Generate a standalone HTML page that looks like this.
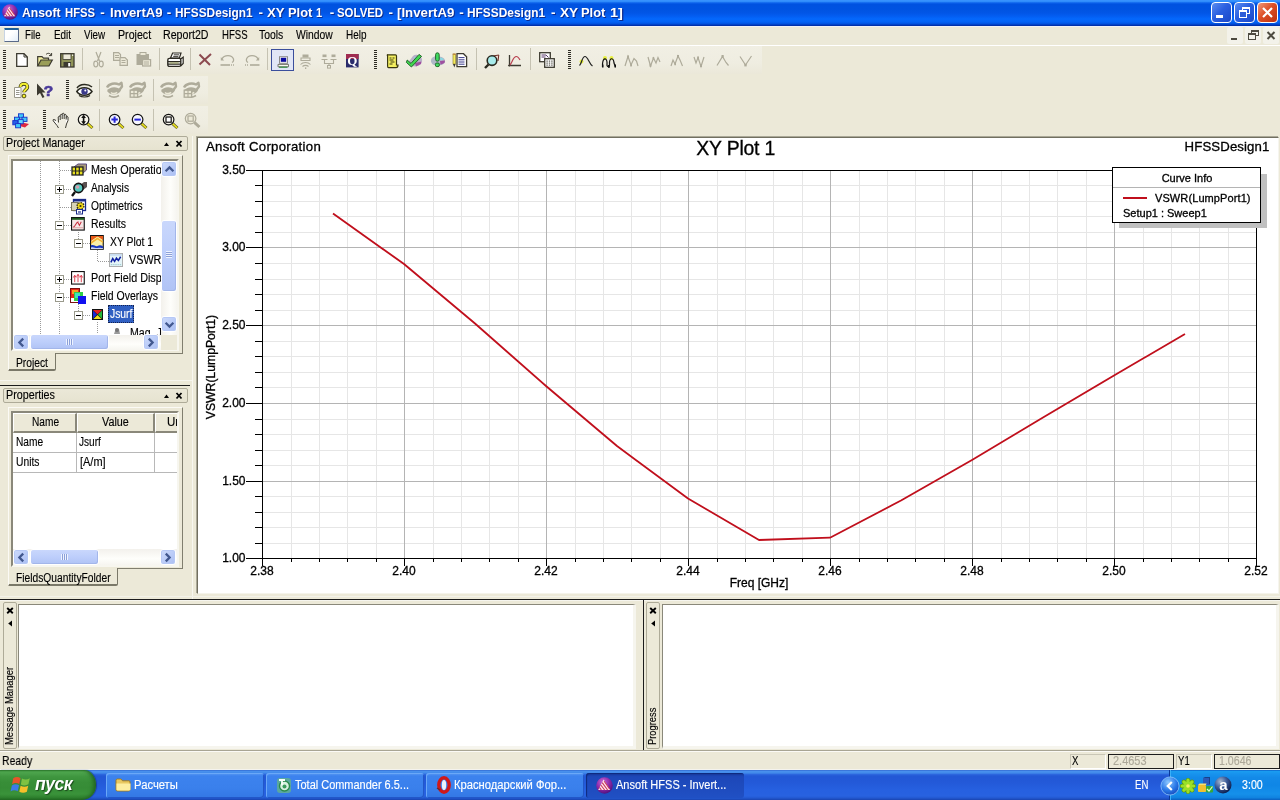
<!DOCTYPE html>
<html lang="en">
<head>
<meta charset="utf-8">
<title>Ansoft HFSS - InvertA9 - HFSSDesign1 - XY Plot 1 - SOLVED - [InvertA9 - HFSSDesign1 - XY Plot 1]</title>
<style>
html,body{margin:0;padding:0}
body{width:1280px;height:800px;overflow:hidden;position:relative;background:#ece9d8;
 font-family:"Liberation Sans",sans-serif;font-size:11px;color:#000;line-height:13px}
.a{position:absolute;box-sizing:border-box}
.t{position:absolute;white-space:nowrap;line-height:13px;font-size:12px;-webkit-text-stroke:0.14px currentColor}
svg{position:absolute;overflow:visible}
body>div{will-change:transform}
/* title bar */
#title{left:0;top:0;width:1280px;height:26px;
 background:linear-gradient(to bottom,#3b95ff 0,#2f8cfb 1.5px,#0a60ea 3px,#0052e0 4.5px,#0053e1 9px,#0256e6 13px,#035df1 16px,#0468fc 19px,#0362f5 22px,#0150dc 24px,#0136b8 25px,#002c9e 26px)}
#title .t{color:#fff;font-weight:bold;font-size:13px;line-height:15px;text-shadow:1px 1px 0 #0c2a8c;letter-spacing:-0.09px}
.tb{position:absolute;top:2px;width:21px;height:21px;box-sizing:border-box;border:1px solid #fff;border-radius:4px;
 background:linear-gradient(135deg,#5c8df0 0,#2a5fe0 45%,#1a47c8 100%)}
.tb.x{background:linear-gradient(135deg,#f0997a 0,#dd4f26 45%,#bd3010 100%)}
#ttxt{left:0;top:0}
#ttxt .w{position:absolute;top:5px;white-space:nowrap;color:#fff;font-weight:bold;font-size:13.5px;line-height:15px;text-shadow:1px 1px 0 #0c2a8c;transform-origin:0 0}
#plot text{stroke:#000;stroke-width:.3px}
/* menu */
#menu{left:0;top:26px;width:1280px;height:19px;background:#ece9d8}
#menu .t{top:3px}
.hl{background:#fff;height:1px}
/* toolbars */
.grip{position:absolute;width:3px;height:20px;
 background:repeating-linear-gradient(to bottom,#2e2c24 0,#2e2c24 1px,transparent 1px,transparent 2px)}
.sep{position:absolute;width:1px;height:22px;background:#c5c2b2}
.band{position:absolute;height:28px;background:linear-gradient(to bottom,#f1efe4 0,#efede1 60%,#ebe8d9 100%)}
/* dock captions */
.cap{position:absolute;box-sizing:border-box;border:1px solid #aeab98;border-radius:2px;
 background:linear-gradient(to bottom,#ebe8d8 0,#e6e3d0 100%)}
.sunk{position:absolute;box-sizing:border-box;border-top:2px solid #8a887a;border-left:2px solid #8a887a;border-right:2px solid #f7f6ef;border-bottom:2px solid #f7f6ef;background:#fff}
.frame{position:absolute;box-sizing:border-box;border:1px solid #fbfaf5;border-right-color:#807e6e;border-bottom-color:#807e6e}
.tab{position:absolute;box-sizing:border-box;background:#ece9d8;border-left:1px solid #fbfaf5;border-right:1px solid #7a7868;border-bottom:2px solid #7a7868;border-radius:0 0 2px 1px}
/* scrollbars */
.sbtn{position:absolute;box-sizing:border-box;width:16px;height:16px;border:1px solid #fff;border-radius:3px;
 background:linear-gradient(135deg,#cddbfb 0,#bccdf8 50%,#aabef2 100%);box-shadow:inset 0 0 0 1px #b6c8f5}
.sthumb{position:absolute;box-sizing:border-box;border:1px solid #fff;border-radius:3px;background:linear-gradient(to bottom,#c9d7fc 0,#bdcefb 50%,#b0c3f5 100%);box-shadow:inset -1px -1px 0 #a3b6ea}
.strack{position:absolute;background:linear-gradient(to bottom,#f3f1ec 0,#fefefb 60%,#f6f5f0 100%)}
.strackv{position:absolute;background:linear-gradient(to right,#f3f1ec 0,#fefefb 60%,#f6f5f0 100%)}
/* tree */
.tr{position:absolute;white-space:nowrap;line-height:13px;font-size:12px;-webkit-text-stroke:0.14px currentColor}
.pm{position:absolute;box-sizing:border-box;width:9px;height:9px;border:1px solid #9a9a8c;background:#fff}
.pm:before{content:"";position:absolute;left:1px;top:3px;width:5px;height:1px;background:#000}
.pm.p:after{content:"";position:absolute;left:3px;top:1px;width:1px;height:5px;background:#000}
/* status */
.sbox{position:absolute;box-sizing:border-box;height:15px;border:1px solid #c9c6b6;border-right-color:#fff;border-bottom-color:#fff}
.sval{position:absolute;box-sizing:border-box;height:15px;border:1px solid #1c1c1c;color:#aca899}
/* taskbar */
#task{left:0;top:770px;width:1280px;height:30px;
 background:linear-gradient(to bottom,#2a5cc8 0,#4a92ee 1px,#418aea 3px,#2c66de 4.5px,#2258d5 6px,#2359d8 12px,#2660e0 20px,#2862e0 26px,#2258d0 28px,#1a44b0 30px)}
.tbtn{position:absolute;box-sizing:border-box;top:3px;height:25px;border-radius:3px;color:#fff;
 background:linear-gradient(to bottom,#5b9bf3 0,#3c82ee 12%,#3a80ec 60%,#3377e4 100%);box-shadow:inset 1px 1px 0 #6aa8f8,inset -1px -1px 0 #2257c8}
.tbtn.act{background:linear-gradient(to bottom,#17389a 0,#1d47b8 15%,#2050c4 100%);box-shadow:inset 1px 1px 1px #0f2a7c}
.tbtn .t{top:6px;color:#fff;font-size:12px}
</style>
</head>
<body>

<!-- ================= TITLE BAR ================= -->
<div class="a" id="title">
 <svg style="left:2px;top:4px" width="16" height="16" viewBox="0 0 17 17">
  <defs><radialGradient id="lg" cx="40%" cy="30%" r="75%"><stop offset="0" stop-color="#c86ad8"/><stop offset="0.55" stop-color="#8a28a8"/><stop offset="1" stop-color="#4a0f78"/></radialGradient></defs>
  <circle cx="8.5" cy="8.5" r="8.3" fill="url(#lg)"/>
  <path d="M7.6 2.6 L14.2 13 H2.2 Z" fill="#ffe4ec"/>
  <path d="M6.2 5.6 L11.6 13 M4.8 8 L8.6 13 M3.4 10.4 L5.4 13 M8.2 4.2 L13.6 12" stroke="#c8385a" stroke-width="1.1" fill="none"/>
 </svg>
 <div class="a" id="ttxt"><span class="w" style="left:21.7px;transform:scaleX(0.903)">Ansoft</span> <span class="w" style="left:65.2px;transform:scaleX(0.836)">HFSS</span> <span class="w" style="left:100.2px;transform:scaleX(1.000)">-</span> <span class="w" style="left:109.7px;transform:scaleX(0.974)">InvertA9</span> <span class="w" style="left:166.7px;transform:scaleX(1.000)">-</span> <span class="w" style="left:174.7px;transform:scaleX(0.877)">HFSSDesign1</span> <span class="w" style="left:258.4px;transform:scaleX(1.000)">-</span> <span class="w" style="left:267.2px;transform:scaleX(0.977)">XY</span> <span class="w" style="left:288.4px;transform:scaleX(0.955)">Plot</span> <span class="w" style="left:315.7px;transform:scaleX(0.820)">1</span> <span class="w" style="left:329.7px;transform:scaleX(1.000)">-</span> <span class="w" style="left:337.2px;transform:scaleX(0.846)">SOLVED</span> <span class="w" style="left:388.4px;transform:scaleX(1.000)">-</span> <span class="w" style="left:396.7px;transform:scaleX(0.980)">[InvertA9</span> <span class="w" style="left:459.2px;transform:scaleX(1.000)">-</span> <span class="w" style="left:467.2px;transform:scaleX(0.882)">HFSSDesign1</span> <span class="w" style="left:551.0px;transform:scaleX(1.000)">-</span> <span class="w" style="left:559.7px;transform:scaleX(1.005)">XY</span> <span class="w" style="left:581.0px;transform:scaleX(0.955)">Plot</span> <span class="w" style="left:609.7px;transform:scaleX(1.080)">1]</span></div>
 <div class="tb" style="left:1211px"><div class="a" style="left:4px;top:12px;width:7px;height:3px;background:#fff"></div></div>
 <div class="tb" style="left:1234px">
  <div class="a" style="left:7px;top:4px;width:8px;height:7px;border:1px solid #fff;border-top-width:2px"></div>
  <div class="a" style="left:4px;top:7px;width:8px;height:8px;border:1px solid #fff;border-top-width:2px;background:#2c5cd8"></div>
 </div>
 <div class="tb x" style="left:1257px">
  <svg style="left:0;top:0" width="19" height="19" viewBox="0 0 19 19"><path d="M5 5 L14 14 M14 5 L5 14" stroke="#fff" stroke-width="2.2" fill="none"/></svg>
 </div>
</div>

<!-- ================= MENU BAR ================= -->
<div class="a" id="menu">
 <div class="a" style="left:0;top:0;width:1280px;height:1px;background:#f0f1f6"></div>
 <div class="a" style="left:4px;top:2px;width:15px;height:14px;border:1px solid #5a6a88;border-left-color:#c8d4e4;border-top:2px solid #1f5f98;border-radius:1px;background:linear-gradient(135deg,#fff 40%,#e4eef8 100%)"></div>
 <span class="t" style="left:25.4px;transform:scaleX(0.804);transform-origin:0 0">File</span>
 <span class="t" style="left:53.6px;transform:scaleX(0.825);transform-origin:0 0">Edit</span>
 <span class="t" style="left:83.8px;transform:scaleX(0.819);transform-origin:0 0">View</span>
 <span class="t" style="left:117.5px;transform:scaleX(0.887);transform-origin:0 0">Project</span>
 <span class="t" style="left:163.4px;transform:scaleX(0.886);transform-origin:0 0">Report2D</span>
 <span class="t" style="left:221.9px;transform:scaleX(0.8);transform-origin:0 0">HFSS</span>
 <span class="t" style="left:259.0px;transform:scaleX(0.867);transform-origin:0 0">Tools</span>
 <span class="t" style="left:296.0px;transform:scaleX(0.86);transform-origin:0 0">Window</span>
 <span class="t" style="left:345.5px;transform:scaleX(0.828);transform-origin:0 0">Help</span>
 <!-- MDI child buttons -->
 <div class="a" style="left:1227px;top:1px;width:16px;height:17px;background:#f3f2ea;border-radius:2px"><div class="a" style="left:4px;top:11px;width:6px;height:2px;background:#4d4a40"></div></div>
 <div class="a" style="left:1245px;top:1px;width:16px;height:17px;background:#f3f2ea;border-radius:2px">
  <div class="a" style="left:6px;top:3px;width:8px;height:6px;border:1px solid #4d4a40;border-top-width:2px"></div>
  <div class="a" style="left:3px;top:6px;width:8px;height:7px;border:1px solid #4d4a40;border-top-width:2px;background:#f3f2ea"></div>
 </div>
 <div class="a" style="left:1263px;top:1px;width:16px;height:17px;background:#f3f2ea;border-radius:2px">
  <svg style="left:0;top:0" width="16" height="17" viewBox="0 0 16 17"><path d="M4.5 5 L11.5 12 M11.5 5 L4.5 12" stroke="#4d4a40" stroke-width="2" fill="none"/></svg>
 </div>
</div>
<div class="a hl" style="left:0;top:45px;width:1280px"></div>

<!-- ================= TOOLBARS ================= -->
<div class="a" id="tools" style="left:0;top:0;width:0;height:0">
<!--TOOLBAR_CONTENT-->
<div class="band" style="left:0;top:46px;width:762px"></div>
<div class="band" style="left:0;top:76px;width:208px"></div>
<div class="band" style="left:0;top:106px;width:208px"></div>
<div class="grip" style="left:3px;top:50px"></div>
<div class="grip" style="left:374px;top:50px"></div>
<div class="grip" style="left:568px;top:50px"></div>
<div class="grip" style="left:3px;top:80px"></div>
<div class="grip" style="left:66px;top:80px"></div>
<div class="grip" style="left:3px;top:110px"></div>
<div class="grip" style="left:43px;top:110px"></div>
<div class="sep" style="left:82px;top:48px"></div>
<div class="sep" style="left:159px;top:48px"></div>
<div class="sep" style="left:190px;top:48px"></div>
<div class="sep" style="left:267px;top:48px"></div>
<div class="sep" style="left:476px;top:48px"></div>
<div class="sep" style="left:530px;top:48px"></div>
<div class="sep" style="left:99px;top:79px"></div>
<div class="sep" style="left:153px;top:79px"></div>
<div class="sep" style="left:99px;top:109px"></div>
<div class="sep" style="left:153px;top:109px"></div>
<svg style="left:16px;top:53px" width="12" height="14" viewBox="0 0 12 14"><path d="M0.7 0.7 H8 L11.3 4 V13.3 H0.7 Z" fill="#fff" stroke="#3c3a30" stroke-width="1.3"/><path d="M8 0.7 V4 H11.3" fill="none" stroke="#3c3a30" stroke-width="1"/></svg>
<svg style="left:37px;top:52px" width="16" height="15" viewBox="0 0 16 15"><path d="M9 2.5 C10.5 0.8 13 0.8 14.2 3.2 M14.6 1 V3.6 H12" fill="none" stroke="#3c3a30" stroke-width="1"/><path d="M0.7 14 V4.7 H5 L6.5 6.2 H11.5 V8" fill="#f3f0a0" stroke="#3c3a30" stroke-width="1.2"/><path d="M0.7 14 L4 8 H15.3 L12 14 Z" fill="#9a9e58" stroke="#3c3a30" stroke-width="1.2"/></svg>
<svg style="left:60px;top:53px" width="15" height="15" viewBox="0 0 15 15"><rect x="0.7" y="0.7" width="13.3" height="13.3" fill="#8f9358" stroke="#3c3a30" stroke-width="1.3"/><rect x="3" y="1" width="8" height="5.5" fill="#ece9d8" stroke="#3c3a30" stroke-width="0.8"/><rect x="3.5" y="9" width="7.5" height="5" fill="#3c3a30"/><rect x="8.2" y="10" width="2" height="3.4" fill="#fff"/><rect x="12" y="1.6" width="1.2" height="1.2" fill="#fff"/></svg>
<svg style="left:93px;top:51px" width="11" height="17" viewBox="0 0 11 17"><path d="M3 1 L6.5 10 M8 1 L4.5 10" stroke="#aeab9a" stroke-width="1.2" fill="none"/><ellipse cx="2.8" cy="13" rx="2" ry="2.8" fill="none" stroke="#aeab9a" stroke-width="1.2"/><ellipse cx="8.2" cy="13" rx="2" ry="2.8" fill="none" stroke="#aeab9a" stroke-width="1.2"/></svg>
<svg style="left:113px;top:52px" width="16" height="15" viewBox="0 0 16 15"><path d="M0.6 0.6 H5.5 L7.5 2.6 V8.4 H0.6 Z" fill="#ece9d8" stroke="#aeab9a" stroke-width="1.2"/><path d="M2 3.5H6M2 5.5H6" stroke="#aeab9a" stroke-width="1"/><path d="M7 5.6 H12 L14.4 8 V13.4 H7 Z" fill="#ece9d8" stroke="#aeab9a" stroke-width="1.2"/><path d="M8.5 8.5H12.5M8.5 10.5H12.5" stroke="#aeab9a" stroke-width="1"/></svg>
<svg style="left:136px;top:52px" width="16" height="16" viewBox="0 0 16 16"><rect x="0.5" y="2" width="12.5" height="11" fill="#aeab9a"/><rect x="4" y="0.5" width="6" height="3" fill="#ece9d8" stroke="#aeab9a" stroke-width="1"/><rect x="6.6" y="7.6" width="8" height="6.4" fill="#ece9d8" stroke="#aeab9a" stroke-width="1.2"/><path d="M8 10H13M8 12H13" stroke="#aeab9a" stroke-width="1"/></svg>
<svg style="left:167px;top:52px" width="17" height="16" viewBox="0 0 17 16"><path d="M3.5 6 L5.6 1 H14 L12.4 6 Z" fill="#fff" stroke="#2c2a22" stroke-width="1.2"/><path d="M6.8 2.8 H12 M6.2 4.4 H11.4" stroke="#2c2a22" stroke-width="0.9"/><path d="M13.6 7 L16.2 5.2 V11.4 L13.6 14" fill="#fff" stroke="#2c2a22" stroke-width="1.2"/><rect x="0.8" y="6.4" width="13" height="8" rx="1.6" fill="#fff" stroke="#2c2a22" stroke-width="1.4"/><path d="M1 9.6 H13.8 M1 12.2 H13.8" stroke="#2c2a22" stroke-width="1.2"/><rect x="2.6" y="10.4" width="9" height="1.1" fill="#9aa060"/></svg>
<svg style="left:198px;top:53px" width="15" height="14" viewBox="0 0 15 14"><path d="M1.5 1.5 L12 12 M13 1 L1.5 11.5" stroke="#8c4a50" stroke-width="2" fill="none"/></svg>
<svg style="left:220px;top:54px" width="16" height="13" viewBox="0 0 16 13"><path d="M2 5 C4 0.5 12 0.5 13.5 5 C14 7 13 8 12 8.5" stroke="#aeab9a" stroke-width="1.2" fill="none"/><path d="M0.8 3 V6.5 H4.2 Z" fill="#aeab9a"/><path d="M0.5 11H10" stroke="#aeab9a" stroke-width="1.6"/><path d="M11 11H15" stroke="#aeab9a" stroke-width="1.6" stroke-dasharray="1 1"/></svg>
<svg style="left:244px;top:54px" width="16" height="13" viewBox="0 0 16 13"><path d="M14 5 C12 0.5 4 0.5 2.5 5 C2 7 3 8 4 8.5" stroke="#aeab9a" stroke-width="1.2" fill="none"/><path d="M15.2 3 V6.5 H11.8 Z" fill="#aeab9a"/><path d="M6 11H15.5" stroke="#aeab9a" stroke-width="1.6"/><path d="M1 11H5" stroke="#aeab9a" stroke-width="1.6" stroke-dasharray="1 1"/></svg>
<div class="a" style="left:271px;top:49px;width:23px;height:22px;border:1px solid #3a4e9c;background:#e1e6f6"></div>
<svg style="left:277px;top:56px" width="13" height="12" viewBox="0 0 13 12"><rect x="2.5" y="0.7" width="8" height="6.6" fill="#f4f4f4" stroke="#8a8a8a" stroke-width="1"/><rect x="3.8" y="1.8" width="5.4" height="4" fill="#0a0aa0"/><path d="M1 8.4 H11.5 V10.8 H1 Z" fill="#f8f8f0" stroke="#6a6a60" stroke-width="0.9"/><path d="M2 11.2H10.5" stroke="#2a8a3a" stroke-width="1.1"/></svg>
<svg style="left:299px;top:54px" width="14" height="16" viewBox="0 0 14 16"><rect x="3.5" y="0.5" width="6" height="3" fill="#aeab9a"/><path d="M2 6.5 H11 V4 H2 Z" fill="none" stroke="#aeab9a" stroke-width="1.1"/><path d="M1.5 10.5 C4 7.8 9 7.8 11.5 10.5 M3.5 12.5 C5 11 8 11 9.5 12.5" stroke="#aeab9a" stroke-width="1.1" fill="none"/><rect x="6" y="13.4" width="1.3" height="1.6" fill="#aeab9a"/></svg>
<svg style="left:321px;top:54px" width="16" height="15" viewBox="0 0 16 15"><rect x="1.5" y="0.5" width="4" height="2.6" fill="#aeab9a"/><rect x="10.5" y="0.5" width="4" height="2.6" fill="#aeab9a"/><path d="M0.5 5.5H6.5M9.5 5.5H15.5M3.5 6V9.5H12.5V6M8 9.5V12" stroke="#aeab9a" stroke-width="1.1" fill="none"/><rect x="6.5" y="11.5" width="3" height="2.6" fill="none" stroke="#aeab9a" stroke-width="1"/></svg>
<svg style="left:346px;top:54px" width="13" height="14" viewBox="0 0 13 14"><rect x="0" y="0" width="12.6" height="13.4" fill="#2a2c6c"/><rect x="0" y="0" width="12.6" height="5" fill="#a02c50"/><text x="6.3" y="11.2" font-family="'Liberation Serif',serif" font-weight="bold" font-size="13" fill="#fff" text-anchor="middle">Q</text></svg>
<svg style="left:386px;top:54px" width="13" height="15" viewBox="0 0 13 15"><path d="M1 0.8 H9.5 Q10.5 0.8 10.5 2 V11 H12 Q12 13.6 10 13.6 H2.5 Q1.6 13.6 1.6 12 V2.2 Q1.6 1 0.8 0.8" fill="#f4f060" stroke="#3a3810" stroke-width="1.2"/><path d="M3.5 4H5.5M6.5 4H8.5M3.5 6H7.5M4.5 8H8.5M3.5 10H6.5" stroke="#3a3810" stroke-width="1"/></svg>
<svg style="left:406px;top:53px" width="18" height="15" viewBox="0 0 18 15"><path d="M7 3 C9 1 12 1.5 13 3.5 C16 4 17 7 15.5 9 C15 12 12 13 9.5 13.5 L6 13 C3 12 2 9 4 7 Z" fill="#b8b0c8"/><path d="M9 10 L15.5 8.5 L15 11 L10 13.5 Z" fill="#a050a0"/><path d="M8 4 L12 5 L10 8 Z" fill="#80e0e8"/><path d="M1.2 7 L5 10.4 L13 1.4 L15.6 3.4 L5.4 14 L0.4 9.4 Z" fill="#40d850" stroke="#1a5a20" stroke-width="0.9"/></svg>
<svg style="left:429px;top:52px" width="18" height="16" viewBox="0 0 18 16"><path d="M3 6 C5 4 8 4 9 5 C12 4 16 6 16 9 C16 12 13 13 10 13.5 L5 13 C2 12 1 8 3 6 Z" fill="#b0b8c8"/><path d="M11 9 L16 8.5 L15.5 11 L11.5 12.8 Z" fill="#a050a0"/><path d="M11 5.5 L15 7 L12 8.5 Z" fill="#80e0e8"/><rect x="6.6" y="0.8" width="3.6" height="8.4" rx="1.8" fill="#40dc60" stroke="#1a5a20" stroke-width="0.9"/><rect x="6.4" y="11" width="4" height="3.6" rx="1.4" fill="#40dc60" stroke="#1a5a20" stroke-width="0.9"/></svg>
<svg style="left:452px;top:53px" width="16" height="15" viewBox="0 0 16 15"><rect x="1" y="1" width="2.6" height="10" fill="#f4ec60" stroke="#8a7a20" stroke-width="0.6"/><path d="M1 11 H3.6 L2.3 14.5 Z" fill="#3c3a30"/><rect x="0.8" y="0.6" width="3" height="1.4" fill="#c08a40"/><path d="M5 0.7 H11.5 L14.6 3.8 V13.6 H5 Z" fill="#fff" stroke="#3c3a30" stroke-width="1.3"/><path d="M6.5 4.6H12.5M6.5 6.8H12.5M6.5 9H12.5M6.5 11.2H12.5" stroke="#3a3a8a" stroke-width="1"/></svg>
<svg style="left:484px;top:54px" width="16" height="15" viewBox="0 0 16 15"><path d="M9 2 L14.8 1 L14 7" fill="#f0d8d0" stroke="#6a2a20" stroke-width="1"/><circle cx="8" cy="6.6" r="4.8" fill="#a8ecec" stroke="#2a2a20" stroke-width="1.6"/><path d="M4.5 10.5 L1 14" stroke="#2a2a20" stroke-width="2.4"/></svg>
<svg style="left:507px;top:54px" width="15" height="15" viewBox="0 0 15 15"><path d="M2.5 1 V11.5 H14" stroke="#3c3a30" stroke-width="1.3" fill="none"/><path d="M0.8 11.5 L2.5 10 V13 Z" fill="#3c3a30"/><path d="M3 11 C5 9 6 3 9 2.5 C11 2.3 12 4 13 6" stroke="#b84050" stroke-width="1.2" fill="none"/></svg>
<svg style="left:539px;top:52px" width="17" height="17" viewBox="0 0 17 17"><rect x="0.7" y="0.7" width="10.6" height="9" fill="#fff" stroke="#3c3a30" stroke-width="1.3"/><path d="M2.5 3H7L9.5 5.5M2.5 5H6.5" stroke="#5a3a6a" stroke-width="1" fill="none"/><rect x="5.7" y="6.7" width="9.6" height="8.6" fill="#fff" stroke="#3c3a30" stroke-width="1.3"/><path d="M7.4 9.1H8.8M9.8 9.1H11.2M12.2 9.1H13.6M7.4 11.1H8.8M9.8 11.1H11.2M12.2 11.1H13.6M7.4 13.1H8.8M9.8 13.1H11.2M12.2 13.1H13.6" stroke="#3c3a30" stroke-width="1"/></svg>
<svg style="left:578px;top:54px" width="16" height="14" viewBox="0 0 16 14"><circle cx="3.5" cy="7.5" r="2" fill="#e8f040"/><path d="M1.5 11.5 C4 9 4 2.5 7 2.5 C10 2.5 11 10 14.5 12" stroke="#222" stroke-width="1.2" fill="none"/></svg>
<svg style="left:601px;top:55px" width="16" height="14" viewBox="0 0 16 14"><circle cx="4" cy="3" r="2" fill="#e8f040"/><circle cx="10.5" cy="3" r="2" fill="#e8f040"/><rect x="1" y="9.5" width="1.5" height="3" fill="#111"/><rect x="7" y="10" width="1.8" height="2.8" fill="#111"/><rect x="13.5" y="9.5" width="1.5" height="3" fill="#111"/><path d="M1.5 12 V9 C2 2.5 5.5 2.5 6 7 V10.5 C6.5 12 8 12 8.5 10 V7 C9 2.5 12.5 2.5 13 8 L14.5 12" stroke="#111" stroke-width="1.2" fill="none"/></svg>
<svg style="left:624px;top:54px" width="16" height="14" viewBox="0 0 16 14"><rect x="3.2" y="1.5" width="1.8" height="2.6" fill="#aeab9a"/><rect x="6.2" y="10" width="1.8" height="2.4" fill="#aeab9a"/><path d="M1 12 L4 2.5 L7 11 L10 4.5 L12.5 7 L14 12" stroke="#aeab9a" stroke-width="1.2" fill="none"/></svg>
<svg style="left:647px;top:54px" width="16" height="14" viewBox="0 0 16 14"><rect x="2.6" y="10.2" width="1.8" height="2.6" fill="#aeab9a"/><rect x="5.6" y="3" width="1.6" height="2.2" fill="#aeab9a"/><path d="M1 3 L3.5 12 L6.5 4 L9 9 L11 3.5 L13 8" stroke="#aeab9a" stroke-width="1.2" fill="none"/></svg>
<svg style="left:670px;top:54px" width="16" height="14" viewBox="0 0 16 14"><rect x="7" y="1" width="2" height="2.6" fill="#aeab9a"/><rect x="4.4" y="9" width="1.6" height="2.2" fill="#aeab9a"/><path d="M1 12 L3 6 L5 10 L8 2 L10 6 L12.5 12" stroke="#aeab9a" stroke-width="1.2" fill="none"/></svg>
<svg style="left:693px;top:54px" width="16" height="14" viewBox="0 0 16 14"><rect x="4.2" y="2.6" width="1.8" height="2.6" fill="#aeab9a"/><rect x="7" y="10.4" width="2" height="2.6" fill="#aeab9a"/><path d="M1 3 L3 9 L5 3.5 L8 12.5 L11 3" stroke="#aeab9a" stroke-width="1.2" fill="none"/></svg>
<svg style="left:716px;top:54px" width="16" height="14" viewBox="0 0 16 14"><rect x="5.5" y="1" width="2.2" height="2.6" fill="#aeab9a"/><path d="M1 11.5 L6.5 2.5 L10 8.5 L12.5 11.5" stroke="#aeab9a" stroke-width="1.2" fill="none"/></svg>
<svg style="left:739px;top:54px" width="16" height="14" viewBox="0 0 16 14"><rect x="5.3" y="9.8" width="2.4" height="2.6" fill="#aeab9a"/><path d="M1 2.5 L6.5 11 L12.5 2" stroke="#aeab9a" stroke-width="1.2" fill="none"/></svg>
<svg style="left:13px;top:82px" width="16" height="17" viewBox="0 0 16 17"><path d="M1.5 5.5 H8 V15.5 H1.5 Z" fill="#fff" stroke="#9a988a" stroke-width="1"/><path d="M3 8.5H6.5M3 10.5H6.5M3 12.5H6.5" stroke="#8a8a80" stroke-width="0.9"/><path d="M7.4 5 C7.4 0.8 14.4 0.8 14.4 5 C14.4 7.8 11 7.8 11 10.3" stroke="#3a3810" stroke-width="3.6" fill="none"/><path d="M7.4 5 C7.4 0.8 14.4 0.8 14.4 5 C14.4 7.8 11 7.8 11 10.3" stroke="#f4f030" stroke-width="2" fill="none"/><circle cx="11" cy="14" r="1.9" fill="#f4f030" stroke="#3a3810" stroke-width="0.9"/></svg>
<svg style="left:36px;top:83px" width="17" height="16" viewBox="0 0 17 16"><path d="M1 0.5 V12.5 L4 10 L6.5 15 L8.5 14 L6 9.5 H9.5 Z" fill="#3c3a30"/><text x="12.6" y="12.6" font-family="'Liberation Sans',sans-serif" font-weight="bold" font-size="15.5" fill="#4a3a9a" stroke="#4a3a9a" stroke-width="0.7" text-anchor="middle">?</text></svg>
<svg style="left:76px;top:83px" width="17" height="16" viewBox="0 0 17 16"><path d="M1 5 C4 0.5 12 0.5 16 4" stroke="#2a2a20" stroke-width="1.5" fill="none"/><path d="M0.8 8.5 C4 3.5 12.5 3.5 16 8.5 C12.5 13.5 4 13.5 0.8 8.5 Z" fill="#fff" stroke="#2a2a20" stroke-width="1.5"/><circle cx="8.5" cy="8.5" r="3.2" fill="#3a3a8a"/><circle cx="9.3" cy="7.6" r="1" fill="#fff"/><path d="M3 12.5 C6 14.5 11 14.5 14 12.5" stroke="#2a2a20" stroke-width="1.2" fill="none"/></svg>
<svg style="left:106px;top:82px" width="17" height="16" viewBox="0 0 17 16"><path d="M1 5.5 C3 1.5 9 0.5 13 2.5 L15.5 0.8 L16 4.5 C15 6 14 7.5 12.5 8.5" stroke="#aeab9a" stroke-width="2.4" fill="none" stroke-linejoin="round"/><path d="M1 9 C3.5 4.5 11.5 4 15 8.5 C12 13.5 4.5 14 1 9 Z" fill="#aeab9a"/><path d="M5 10.5 C6.5 12 9.5 12 11 10.2" stroke="#ece9d8" stroke-width="1.6" fill="none"/><path d="M3 13.5 C6 15.5 10 15.5 13 13.5" stroke="#aeab9a" stroke-width="1.6" fill="none"/></svg>
<svg style="left:129px;top:82px" width="17" height="16" viewBox="0 0 17 16"><path d="M1 5.5 C3 1.5 9 0.5 13 2.5 L15.5 0.8 L16 4.5 C15 6 14 7.5 12.5 8.5" stroke="#aeab9a" stroke-width="2.4" fill="none" stroke-linejoin="round"/><path d="M1 9 C3.5 4.5 11.5 4 15 8.5 C12 13.5 4.5 14 1 9 Z" fill="#aeab9a"/><path d="M5 10.5 C6.5 12 9.5 12 11 10.2" stroke="#ece9d8" stroke-width="1.6" fill="none"/><path d="M3 13.5 C6 15.5 10 15.5 13 13.5" stroke="#aeab9a" stroke-width="1.6" fill="none"/><rect x="1.2" y="8.2" width="7.4" height="7" fill="#ece9d8" stroke="#aeab9a" stroke-width="1.3"/><path d="M1.2 11.6H8.6M5 8.2V15.2" stroke="#aeab9a" stroke-width="1.1"/></svg>
<svg style="left:160px;top:82px" width="17" height="16" viewBox="0 0 17 16"><path d="M1 5.5 C3 1.5 9 0.5 13 2.5 L15.5 0.8 L16 4.5 C15 6 14 7.5 12.5 8.5" stroke="#aeab9a" stroke-width="2.4" fill="none" stroke-linejoin="round"/><path d="M1 9 C3.5 4.5 11.5 4 15 8.5 C12 13.5 4.5 14 1 9 Z" fill="#aeab9a"/><path d="M5 10.5 C6.5 12 9.5 12 11 10.2" stroke="#ece9d8" stroke-width="1.6" fill="none"/><path d="M3 13.5 C6 15.5 10 15.5 13 13.5" stroke="#aeab9a" stroke-width="1.6" fill="none"/></svg>
<svg style="left:183px;top:82px" width="17" height="16" viewBox="0 0 17 16"><path d="M1 5.5 C3 1.5 9 0.5 13 2.5 L15.5 0.8 L16 4.5 C15 6 14 7.5 12.5 8.5" stroke="#aeab9a" stroke-width="2.4" fill="none" stroke-linejoin="round"/><path d="M1 9 C3.5 4.5 11.5 4 15 8.5 C12 13.5 4.5 14 1 9 Z" fill="#aeab9a"/><path d="M5 10.5 C6.5 12 9.5 12 11 10.2" stroke="#ece9d8" stroke-width="1.6" fill="none"/><path d="M3 13.5 C6 15.5 10 15.5 13 13.5" stroke="#aeab9a" stroke-width="1.6" fill="none"/><rect x="1.2" y="8.2" width="7.4" height="7" fill="#ece9d8" stroke="#aeab9a" stroke-width="1.3"/><path d="M1.2 11.6H8.6M5 8.2V15.2" stroke="#aeab9a" stroke-width="1.1"/></svg>
<svg style="left:12px;top:113px" width="18" height="16" viewBox="0 0 18 16"><path d="M4 12 L13 14.5 L17 11 L8 9 Z" fill="#e02840"/><g stroke="#1a30c8" stroke-width="0.9"><rect x="6.5" y="0.8" width="5" height="4.2" fill="#40c8f8"/><rect x="2.5" y="4.2" width="5" height="4.2" fill="#40c8f8"/><rect x="10" y="4.2" width="5" height="4.2" fill="#40c8f8"/><rect x="0.8" y="7.6" width="5" height="4.2" fill="#2860e8"/><rect x="6.2" y="6.6" width="5" height="4.2" fill="#60d8ff"/><rect x="3.6" y="10.6" width="5" height="4.2" fill="#40c8f8"/></g></svg>
<svg style="left:52px;top:112px" width="18" height="17" viewBox="0 0 18 17"><path d="M4 8.5 L2 7.5 Q0.6 7.4 1.2 8.8 L5 13.5 L6.5 16 M13.5 16 L14.5 12 L16 8.5 V5 Q15.2 3.6 14.2 5 V7.5 M14.2 5.5 V3 Q13.2 1.6 12.2 3 V7 M12.2 3.5 V1.8 Q11.2 0.6 10.2 1.8 V7 M10.2 3 Q9.2 1.6 8.2 3 V8 M8.2 4.5 Q7 3.5 6.2 5 L6.5 10.5" stroke="#3c3a30" stroke-width="1" fill="#fff" stroke-linejoin="round"/></svg>
<svg style="left:77px;top:113px" width="17" height="16" viewBox="0 0 17 16"><path d="M10.6 10.6 L15.4 15" stroke="#55501a" stroke-width="3"/><path d="M10.6 10.6 L15.2 14.8" stroke="#e8e020" stroke-width="1.7"/><circle cx="6.6" cy="6.6" r="5.3" fill="#f6f4ea" stroke="#111" stroke-width="1.2"/><path d="M6.6 2.4 V10.8" stroke="#111" stroke-width="1.6" fill="none"/><path d="M4.2 5 L6.6 2 L9 5 Z M4.2 8.2 L6.6 11.2 L9 8.2 Z" fill="#111"/></svg>
<svg style="left:108px;top:113px" width="17" height="16" viewBox="0 0 17 16"><path d="M10.6 10.6 L15.4 15" stroke="#55501a" stroke-width="3"/><path d="M10.6 10.6 L15.2 14.8" stroke="#e8e020" stroke-width="1.7"/><circle cx="6.6" cy="6.6" r="5.3" fill="#f6f6ff" stroke="#111" stroke-width="1.2"/><path d="M3.4 6.6H9.8M6.6 3.4V9.8" stroke="#2828d8" stroke-width="2" fill="none"/></svg>
<svg style="left:131px;top:113px" width="17" height="16" viewBox="0 0 17 16"><path d="M10.6 10.6 L15.4 15" stroke="#55501a" stroke-width="3"/><path d="M10.6 10.6 L15.2 14.8" stroke="#e8e020" stroke-width="1.7"/><circle cx="6.6" cy="6.6" r="5.3" fill="#f6f6ff" stroke="#111" stroke-width="1.2"/><path d="M3.4 6.6H9.8" stroke="#2828d8" stroke-width="2" fill="none"/></svg>
<svg style="left:162px;top:113px" width="17" height="16" viewBox="0 0 17 16"><path d="M10.6 10.6 L15.4 15" stroke="#55501a" stroke-width="3"/><path d="M10.6 10.6 L15.2 14.8" stroke="#e8e020" stroke-width="1.7"/><circle cx="6.6" cy="6.6" r="5.3" fill="#f6f4ea" stroke="#111" stroke-width="1.2"/><rect x="4" y="4" width="5.2" height="5.2" fill="#fff" stroke="#111" stroke-width="1.2"/></svg>
<svg style="left:184px;top:112px" width="17" height="16" viewBox="0 0 17 16"><path d="M10.6 10.6 L15.4 15" stroke="#aeab9a" stroke-width="3"/><path d="M10.6 10.6 L15.2 14.8" stroke="#aeab9a" stroke-width="1.7"/><circle cx="6.6" cy="6.6" r="5.3" fill="#ece9d8" stroke="#aeab9a" stroke-width="1.2"/><rect x="4" y="4" width="5.2" height="5.2" fill="none" stroke="#aeab9a" stroke-width="1.2"/></svg>
<!--/TOOLBAR_CONTENT-->
</div>

<!-- ================= LEFT DOCK ================= -->
<div class="a" id="left" style="left:0;top:0;width:0;height:0">
<!--LEFT_CONTENT-->
<!-- vertical splitter between dock and plot -->
<div class="a" style="left:192px;top:136px;width:1px;height:463px;background:#f8f7f0"></div>
<!-- Project Manager caption -->
<div class="cap" style="left:3px;top:136px;width:185px;height:15px"></div>
<span class="t" style="left:5.6px;top:137px;transform:scaleX(0.895);transform-origin:0 0">Project Manager</span>
<svg style="left:163px;top:140px" width="20" height="8" viewBox="0 0 20 8"><path d="M1 6 L3.5 2.5 L6 6 Z" fill="#000"/><path d="M13.5 1 L18.5 6.5 M18.5 1 L13.5 6.5" stroke="#000" stroke-width="1.8" fill="none"/></svg>
<!-- tree frame -->
<div class="frame" style="left:8px;top:155px;width:175px;height:199px"></div>
<div class="sunk" style="left:11px;top:159px;width:168px;height:192px"></div>
<div class="a" id="tree" style="left:13px;top:161px;width:147.5px;height:174px;overflow:hidden">
 <div class="a" style="left:-13px;top:-161px;width:0;height:0">
  <svg style="left:0;top:0" width="200" height="360" viewBox="0 0 200 360">
   <g stroke="#9a9a9a" stroke-width="1" fill="none" stroke-dasharray="1 1" shape-rendering="crispEdges">
    <path d="M40.5 161V340M59.5 161V340"/>
    <path d="M60 170.5H71M64 189.5H71M60 207.5H71M64 225.5H71M64 279.5H71M64 297.5H71"/>
    <path d="M78.5 232V239M83 243.5H90M97.5 250V261.5H109"/>
    <path d="M78.5 304V311M83 315.5H91M97.5 322V340"/>
   </g>
  </svg>
  <!-- expand boxes -->
  <div class="pm p" style="left:55px;top:185px"></div>
  <div class="pm" style="left:55px;top:221px"></div>
  <div class="pm" style="left:74px;top:239px"></div>
  <div class="pm p" style="left:55px;top:275px"></div>
  <div class="pm" style="left:55px;top:293px"></div>
  <div class="pm" style="left:74px;top:311px"></div>
  <!-- icons -->
  <svg style="left:71px;top:162px" width="16" height="16" viewBox="0 0 16 16"><path d="M3 5 L7 2 H15.5 V8 L12 11" fill="#a89a78" stroke="#5a4a80" stroke-width="1"/><rect x="1" y="5" width="11" height="8" fill="#e8e020" stroke="#222" stroke-width="1.3"/><path d="M1 9H12M4.6 5V13M8.3 5V13" stroke="#222" stroke-width="1.2" fill="none"/></svg>
  <svg style="left:71px;top:180px" width="16" height="18" viewBox="0 0 16 18"><path d="M9 5 L13 2 H16 V7 L12 10" fill="#5a5050"/><circle cx="7.5" cy="8" r="4.6" fill="#58c8c0" stroke="#111" stroke-width="1.6"/><circle cx="6.5" cy="7" r="1.8" fill="#d8a0b0"/><path d="M4 12 L1 16" stroke="#111" stroke-width="2.4"/></svg>
  <svg style="left:71px;top:198px" width="17" height="17" viewBox="0 0 17 17"><rect x="2.5" y="1.5" width="12" height="11" fill="#fff" stroke="#1a2a8a" stroke-width="1.3"/><rect x="2.5" y="1.5" width="12" height="2" fill="#1a2a8a"/><rect x="0.5" y="4.5" width="6" height="8" fill="#d8d4b8" stroke="#7a7460" stroke-width="1"/><circle cx="9.5" cy="8" r="3.4" fill="#f0d818" stroke="#3a3410" stroke-width="1.4" stroke-dasharray="1.6 1"/><circle cx="9.5" cy="8" r="1.1" fill="#3a3410"/><rect x="5.5" y="11.5" width="6" height="4.5" fill="#fff" stroke="#1a2a8a" stroke-width="1"/><path d="M7 14H10" stroke="#1a2a8a" stroke-width="1.2"/></svg>
  <svg style="left:71px;top:217px" width="14" height="14" viewBox="0 0 15 15"><rect x="0.6" y="0.6" width="13.6" height="13.4" fill="#f6e6e6" stroke="#111" stroke-width="1.2"/><rect x="1" y="1" width="13" height="2" fill="#1a5a1a"/><path d="M2 11 C5 11 5 5 8 5 M7 5 L9 9 L11 5" stroke="#c83040" stroke-width="1.1" fill="none"/><path d="M2 11.5H13" stroke="#d89090" stroke-width="0.8"/></svg>
  <svg style="left:90px;top:235px" width="14" height="15" viewBox="0 0 15 15" preserveAspectRatio="none"><rect x="0.6" y="0.6" width="13.6" height="13.6" fill="#fbf0a8" stroke="#111" stroke-width="1.2"/><path d="M1 1 H14 V5 L8 1.5 L1 6 Z" fill="#e85a18"/><path d="M1 7 L8 2.5 L14 6.5 V8 L8 4.5 L1 9 Z" fill="#f6b030"/><path d="M1 10.5 C4 9 6 12 8 11 S12 10 14 11.5 V14 H1 Z" fill="#1838c0"/><path d="M1 12.5 C4 11.5 6 13.5 8 13 S12 12.5 14 13.2 V14 H1 Z" fill="#fff" opacity=".8"/></svg>
  <svg style="left:109px;top:253px" width="14" height="14" viewBox="0 0 15 15"><rect x="0.5" y="0.5" width="14" height="14" fill="#e4f4f8" stroke="#a8a8a8" stroke-width="1"/><rect x="1" y="1" width="13" height="2" fill="#c8dcf0"/><path d="M2 10 L4 6 L6 9 L8 5.5 L10 8 L12.5 4" stroke="#1020a0" stroke-width="1.6" fill="none"/><path d="M2 12.5H13" stroke="#80b8c0" stroke-width="1" stroke-dasharray="1 1"/></svg>
  <svg style="left:71px;top:271px" width="14" height="14" viewBox="0 0 15 15"><rect x="0.6" y="0.6" width="13.6" height="13.4" fill="#fff" stroke="#111" stroke-width="1.2"/><path d="M4 12V5M7.5 12V4M11 12V5M2.5 7 L4 4.5 L5.5 7M6 6 L7.5 3.5 L9 6M9.5 7 L11 4.5 L12.5 7" stroke="#d83848" stroke-width="1" fill="none"/></svg>
  <svg style="left:70px;top:288px" width="17" height="17" viewBox="0 0 17 17"><rect x="0.5" y="0.5" width="9" height="14" fill="#fff" stroke="#7a1010" stroke-width="1"/><rect x="1" y="1" width="8" height="9" fill="#e82818"/><rect x="2" y="2" width="6" height="4" fill="#f8a020"/><rect x="4" y="4" width="9" height="9" fill="#30d048"/><rect x="5" y="5" width="5" height="5" fill="#40e0c0"/><rect x="8" y="8" width="8" height="8" fill="#1010f0"/></svg>
  <svg style="left:92px;top:309px" width="11" height="11" viewBox="0 0 12 12"><rect x="0" y="0" width="12" height="12" fill="#111"/><path d="M1 1 H11 L6 6 Z" fill="#e82020"/><path d="M1 1.5 L5.5 6 L1 10.5 Z" fill="#1828d8"/><path d="M11 1.5 L6.5 6 L11 10.5 Z" fill="#28b838"/><path d="M1.5 11 L6 6.5 L10.5 11 Z" fill="#f0e020"/></svg>
  <svg style="left:111px;top:326px" width="12" height="12" viewBox="0 0 12 12"><path d="M3 8 L5 2 L8 3 L9 8 Z" fill="#9a9a9a"/><circle cx="6" cy="4" r="2" fill="#777"/></svg>
  <!-- labels -->
  <span class="tr" style="left:91.4px;top:164px;transform:scaleX(0.898);transform-origin:0 0">Mesh Operations</span>
  <span class="tr" style="left:91.4px;top:182px;transform:scaleX(0.85);transform-origin:0 0">Analysis</span>
  <span class="tr" style="left:91.4px;top:200px;transform:scaleX(0.85);transform-origin:0 0">Optimetrics</span>
  <span class="tr" style="left:91.4px;top:218px;transform:scaleX(0.872);transform-origin:0 0">Results</span>
  <span class="tr" style="left:109.6px;top:236px;transform:scaleX(0.864);transform-origin:0 0">XY Plot 1</span>
  <span class="tr" style="left:128.8px;top:254px;transform:scaleX(0.9);transform-origin:0 0">VSWR(LumpPort1)</span>
  <span class="tr" style="left:91.4px;top:272px;transform:scaleX(0.899);transform-origin:0 0">Port Field Display</span>
  <span class="tr" style="left:91.4px;top:290px;transform:scaleX(0.872);transform-origin:0 0">Field Overlays</span>
  <div class="a" style="left:108px;top:305px;width:26px;height:18px;background:#2f5fc2;outline:1px dotted #14224e;outline-offset:-1px"></div>
  <span class="tr" style="left:109.8px;top:308px;color:#fff;transform:scaleX(0.862);transform-origin:0 0">Jsurf</span>
  <span class="tr" style="left:129.7px;top:327px;transform:scaleX(0.883);transform-origin:0 0">Mag_J</span>
 </div>
</div>
<!-- tree vertical scrollbar -->
<div class="strackv" style="left:161px;top:161px;width:16px;height:174px"></div>
<div class="sbtn" style="left:161px;top:161px"><svg style="left:3px;top:4px" width="9" height="6" viewBox="0 0 9 6"><path d="M0.6 5.2 L4.5 1.4 L8.4 5.2" stroke="#42588f" stroke-width="2.3" fill="none"/></svg></div>
<div class="sthumb" style="left:161px;top:220px;width:16px;height:72px"><div class="a" style="left:4px;top:30px;width:6px;height:7px;background:repeating-linear-gradient(to bottom,#eef3ff 0,#eef3ff 1px,#8ca0d8 1px,#8ca0d8 2px)"></div></div>
<div class="sbtn" style="left:161px;top:316px"><svg style="left:3px;top:5px" width="9" height="6" viewBox="0 0 9 6"><path d="M0.6 0.8 L4.5 4.6 L8.4 0.8" stroke="#42588f" stroke-width="2.3" fill="none"/></svg></div>
<!-- tree horizontal scrollbar -->
<div class="strack" style="left:13px;top:335px;width:148px;height:15px"></div>
<div class="a" style="left:161px;top:335px;width:16px;height:15px;background:#ece9d8"></div>
<div class="sbtn" style="left:13px;top:334px"><svg style="left:4px;top:3px" width="6" height="9" viewBox="0 0 6 9"><path d="M5.2 0.6 L1.4 4.5 L5.2 8.4" stroke="#42588f" stroke-width="2.3" fill="none"/></svg></div>
<div class="sthumb" style="left:30px;top:334px;width:79px;height:16px"><div class="a" style="left:35px;top:4px;width:7px;height:6px;background:repeating-linear-gradient(to right,#eef3ff 0,#eef3ff 1px,#8ca0d8 1px,#8ca0d8 2px)"></div></div>
<div class="sbtn" style="left:143px;top:334px"><svg style="left:4px;top:3px" width="6" height="9" viewBox="0 0 6 9"><path d="M0.8 0.6 L4.6 4.5 L0.8 8.4" stroke="#42588f" stroke-width="2.3" fill="none"/></svg></div>
<!-- Project tab -->
<div class="tab" style="left:8px;top:353px;width:48px;height:18px"></div>
<div class="a" style="left:9px;top:352px;width:46px;height:2px;background:#ece9d8"></div>
<span class="t" style="left:15.6px;top:357px;transform:scaleX(0.855);transform-origin:0 0">Project</span>

<!-- splitter line -->
<div class="a" style="left:0;top:385px;width:190px;height:1px;background:#1c1c1c"></div>
<div class="a" style="left:0;top:380px;width:192px;height:1px;background:#f6f5ee"></div>
<!-- Properties caption -->
<div class="cap" style="left:3px;top:388px;width:185px;height:15px"></div>
<span class="t" style="left:5.5px;top:389px;transform:scaleX(0.894);transform-origin:0 0">Properties</span>
<svg style="left:163px;top:392px" width="20" height="8" viewBox="0 0 20 8"><path d="M1 6 L3.5 2.5 L6 6 Z" fill="#000"/><path d="M13.5 1 L18.5 6.5 M18.5 1 L13.5 6.5" stroke="#000" stroke-width="1.8" fill="none"/></svg>
<div class="frame" style="left:8px;top:407px;width:175px;height:162px"></div>
<div class="sunk" style="left:11px;top:411px;width:168px;height:156px"></div>
<!-- grid -->
<div class="a" id="grid" style="left:13px;top:413px;width:164px;height:136px;overflow:hidden;background:#fff">
 <div class="a" style="left:0;top:0;width:64px;height:20px;background:#ece9d8;border:1px solid #fff;border-right:2px solid #8a887a;border-bottom:2px solid #8a887a"></div>
 <div class="a" style="left:64px;top:0;width:78px;height:20px;background:#ece9d8;border:1px solid #fff;border-right:2px solid #8a887a;border-bottom:2px solid #8a887a"></div>
 <div class="a" style="left:142px;top:0;width:78px;height:20px;background:#ece9d8;border:1px solid #fff;border-right:2px solid #8a887a;border-bottom:2px solid #8a887a"></div>
 <span class="t" style="left:18.7px;top:3px;transform:scaleX(0.844);transform-origin:0 0">Name</span>
 <span class="t" style="left:89.3px;top:3px;transform:scaleX(0.9);transform-origin:0 0">Value</span>
 <span class="t" style="left:154.2px;top:3px;transform:scaleX(0.96);transform-origin:0 0">Unit</span>
 <div class="a" style="left:0;top:39px;width:164px;height:1px;background:#b8b8b8"></div>
 <div class="a" style="left:0;top:59px;width:164px;height:1px;background:#b8b8b8"></div>
 <div class="a" style="left:63px;top:20px;width:1px;height:40px;background:#b8b8b8"></div>
 <div class="a" style="left:141px;top:20px;width:1px;height:40px;background:#b8b8b8"></div>
 <span class="t" style="left:2.6px;top:23px;transform:scaleX(0.847);transform-origin:0 0">Name</span>
 <span class="t" style="left:65.9px;top:23px;transform:scaleX(0.838);transform-origin:0 0">Jsurf</span>
 <span class="t" style="left:2.6px;top:43px;transform:scaleX(0.856);transform-origin:0 0">Units</span>
 <span class="t" style="left:66.7px;top:43px;transform:scaleX(0.914);transform-origin:0 0">[A/m]</span>
</div>
<div class="strack" style="left:13px;top:549px;width:164px;height:16px"></div>
<div class="sbtn" style="left:13px;top:549px"><svg style="left:4px;top:3px" width="6" height="9" viewBox="0 0 6 9"><path d="M5.2 0.6 L1.4 4.5 L5.2 8.4" stroke="#42588f" stroke-width="2.3" fill="none"/></svg></div>
<div class="sthumb" style="left:30px;top:549px;width:69px;height:16px"><div class="a" style="left:30px;top:4px;width:7px;height:6px;background:repeating-linear-gradient(to right,#eef3ff 0,#eef3ff 1px,#8ca0d8 1px,#8ca0d8 2px)"></div></div>
<div class="sbtn" style="left:160px;top:549px"><svg style="left:4px;top:3px" width="6" height="9" viewBox="0 0 6 9"><path d="M0.8 0.6 L4.6 4.5 L0.8 8.4" stroke="#42588f" stroke-width="2.3" fill="none"/></svg></div>
<div class="tab" style="left:8px;top:568px;width:110px;height:18px"></div>
<div class="a" style="left:9px;top:567px;width:108px;height:2px;background:#ece9d8"></div>
<span class="t" style="left:15.6px;top:572px;transform:scaleX(0.854);transform-origin:0 0">FieldsQuantityFolder</span>

</div>

<!-- ================= PLOT WINDOW ================= -->
<div class="a" id="plot" style="left:197px;top:137px;width:1082px;height:457px;background:#fff;border-top:1px solid #716f60;border-left:1px solid #716f60;border-right:1px solid #f6f5ee;border-bottom:1px solid #f4f3ea;box-shadow:-1px -1px 0 #aaa897">
<!--PLOT_CONTENT-->
<svg style="left:-198px;top:-138px" width="1280" height="800" viewBox="0 0 1280 800" font-family="'Liberation Sans',sans-serif">
<g shape-rendering="crispEdges" fill="none">
<path d="M291.5 171V558M319.5 171V558M347.5 171V558M376.5 171V558M433.5 171V558M461.5 171V558M489.5 171V558M518.5 171V558M575.5 171V558M603.5 171V558M631.5 171V558M660.5 171V558M717.5 171V558M745.5 171V558M773.5 171V558M802.5 171V558M859.5 171V558M887.5 171V558M915.5 171V558M944.5 171V558M1001.5 171V558M1029.5 171V558M1057.5 171V558M1086.5 171V558M1143.5 171V558M1171.5 171V558M1199.5 171V558M1228.5 171V558M263 185.5H1256M263 201.5H1256M263 216.5H1256M263 232.5H1256M263 263.5H1256M263 279.5H1256M263 294.5H1256M263 310.5H1256M263 341.5H1256M263 356.5H1256M263 372.5H1256M263 387.5H1256M263 419.5H1256M263 434.5H1256M263 450.5H1256M263 465.5H1256M263 496.5H1256M263 512.5H1256M263 527.5H1256M263 543.5H1256" stroke="#e6e6e6" stroke-width="1"/>
<path d="M404.5 171V558M546.5 171V558M688.5 171V558M830.5 171V558M972.5 171V558M1114.5 171V558M263 247.5H1256M263 325.5H1256M263 403.5H1256M263 481.5H1256" stroke="#b4b4b4" stroke-width="1"/>
<path d="M246 170.5H1257M246 558.5H1257M262.5 170V566M1256.5 170V566M246 247.5H262M246 325.5H262M246 403.5H262M246 481.5H262M255 185.5H262M255 201.5H262M255 216.5H262M255 232.5H262M255 263.5H262M255 279.5H262M255 294.5H262M255 310.5H262M255 341.5H262M255 356.5H262M255 372.5H262M255 387.5H262M255 419.5H262M255 434.5H262M255 450.5H262M255 465.5H262M255 496.5H262M255 512.5H262M255 527.5H262M255 543.5H262M404.5 558V566M546.5 558V566M688.5 558V566M830.5 558V566M972.5 558V566M1114.5 558V566M291.5 558V562M319.5 558V562M347.5 558V562M376.5 558V562M433.5 558V562M461.5 558V562M489.5 558V562M518.5 558V562M575.5 558V562M603.5 558V562M631.5 558V562M660.5 558V562M717.5 558V562M745.5 558V562M773.5 558V562M802.5 558V562M859.5 558V562M887.5 558V562M915.5 558V562M944.5 558V562M1001.5 558V562M1029.5 558V562M1057.5 558V562M1086.5 558V562M1143.5 558V562M1171.5 558V562M1199.5 558V562M1228.5 558V562" stroke="#000" stroke-width="1"/>
</g>
<polyline fill="none" stroke="#c00f1c" stroke-width="1.8" stroke-linejoin="round" points="333,213.5 404,264 475,323.5 546,386 617,446 688,498.5 759,540 830,537.7 901,500.5 972,460 1043,417.5 1114,375.5 1185,334"/>
<text x="245.5" y="174.0" font-size="12" text-anchor="end">3.50</text>
<text x="245.5" y="251.0" font-size="12" text-anchor="end">3.00</text>
<text x="245.5" y="329.0" font-size="12" text-anchor="end">2.50</text>
<text x="245.5" y="407.0" font-size="12" text-anchor="end">2.00</text>
<text x="245.5" y="485.0" font-size="12" text-anchor="end">1.50</text>
<text x="245.5" y="562.0" font-size="12" text-anchor="end">1.00</text>
<text x="262.0" y="575.2" font-size="12" text-anchor="middle">2.38</text>
<text x="404.0" y="575.2" font-size="12" text-anchor="middle">2.40</text>
<text x="546.0" y="575.2" font-size="12" text-anchor="middle">2.42</text>
<text x="688.0" y="575.2" font-size="12" text-anchor="middle">2.44</text>
<text x="830.0" y="575.2" font-size="12" text-anchor="middle">2.46</text>
<text x="972.0" y="575.2" font-size="12" text-anchor="middle">2.48</text>
<text x="1114.0" y="575.2" font-size="12" text-anchor="middle">2.50</text>
<text x="1256.0" y="575.2" font-size="12" text-anchor="middle">2.52</text>
<text x="759" y="587.2" font-size="12" text-anchor="middle">Freq [GHz]</text>
<text transform="translate(215,367) rotate(-90)" font-size="12.2" text-anchor="middle">VSWR(LumpPort1)</text>
<text x="206" y="150.8" font-size="13.2" letter-spacing="0.28">Ansoft Corporation</text>
<text x="1269.5" y="150.8" font-size="13.2" letter-spacing="0.12" text-anchor="end">HFSSDesign1</text>
<text x="735.7" y="155" font-size="19.4" letter-spacing="-0.2" text-anchor="middle">XY Plot 1</text>
<rect x="1119" y="174" width="148" height="54" fill="#c0c0c0"/>
<rect x="1112.5" y="167.5" width="148" height="55" fill="#fff" stroke="#000" stroke-width="1" shape-rendering="crispEdges"/>
<path d="M1113 187.5H1260" stroke="#b4b4b4" stroke-width="1" shape-rendering="crispEdges"/>
<path d="M1123 198H1147" stroke="#c00f1c" stroke-width="2"/>
<text x="1187" y="182" font-size="11" text-anchor="middle">Curve Info</text>
<text x="1155" y="202" font-size="11" letter-spacing="0.1">VSWR(LumpPort1)</text>
<text x="1123" y="217" font-size="11">Setup1 : Sweep1</text>
</svg>
<!--/PLOT_CONTENT-->
</div>

<!-- ================= BOTTOM DOCK ================= -->
<div class="a" id="bottom" style="left:0;top:0;width:0;height:0">
<!--BOTTOM_CONTENT-->
<div class="a" style="left:0;top:596px;width:1280px;height:1px;background:#f3f2e9"></div>
<div class="a" style="left:0;top:599px;width:1280px;height:1px;background:#1c1c1c"></div>
<div class="a" style="left:0;top:600px;width:1280px;height:1px;background:#f6f5ee"></div>
<!-- Message Manager -->
<div class="cap" style="left:3px;top:602px;width:14px;height:147px;border-radius:2px;background:#ece9d8"></div>
<svg style="left:5px;top:605px" width="10" height="24" viewBox="0 0 10 24"><path d="M2.2 3 L7.8 8.2 M7.8 3 L2.2 8.2" stroke="#000" stroke-width="1.9" fill="none"/><path d="M7 15.6 L3.2 18.5 L7 21.4 Z" fill="#000"/></svg>
<span class="t" style="left:3.2px;top:744.6px;font-size:10px;transform-origin:0 0;transform:rotate(-90deg) scaleX(0.945)">Message Manager</span>
<div class="a" style="left:18px;top:604px;width:618px;height:145px;background:#fff;border-top:1px solid #8a887a;border-left:1px solid #8a887a;border-right:3px solid #f6f5ee;border-bottom:3px solid #f6f5ee"></div>
<!-- splitter -->
<div class="a" style="left:643px;top:600px;width:1px;height:150px;background:#1c1c1c"></div>
<!-- Progress -->
<div class="cap" style="left:646px;top:602px;width:14px;height:147px;border-radius:2px;background:#ece9d8"></div>
<svg style="left:648px;top:605px" width="10" height="24" viewBox="0 0 10 24"><path d="M2.2 3 L7.8 8.2 M7.8 3 L2.2 8.2" stroke="#000" stroke-width="1.9" fill="none"/><path d="M7 15.6 L3.2 18.5 L7 21.4 Z" fill="#000"/></svg>
<span class="t" style="left:646.4px;top:744.6px;font-size:10px;transform-origin:0 0;transform:rotate(-90deg) scaleX(0.935)">Progress</span>
<div class="a" style="left:662px;top:604px;width:617px;height:145px;background:#fff;border-top:1px solid #8a887a;border-left:1px solid #8a887a;border-right:3px solid #f6f5ee;border-bottom:3px solid #f6f5ee"></div>
<div class="a" style="left:0;top:750px;width:1280px;height:1px;background:#a8a594"></div>
</div>

<!-- ================= STATUS BAR ================= -->
<div class="a" id="status" style="left:0;top:0;width:0;height:0">
<!--STATUS_CONTENT-->
<div class="a" style="left:0;top:751px;width:1280px;height:1px;background:#fbfaf6"></div>
<div class="a" style="left:0;top:769px;width:1280px;height:1px;background:#f4f3ee"></div>
<span class="t" style="left:1.8px;top:755px;transform:scaleX(0.871);transform-origin:0 0">Ready</span>
<div class="sbox" style="left:1070px;top:754px;width:36px"></div>
<span class="t" style="left:1071.9px;top:755px;transform:scaleX(0.8);transform-origin:0 0">X</span>
<div class="sval" style="left:1108px;top:754px;width:66px"></div>
<span class="t" style="left:1112.8px;top:755px;color:#aca899;transform:scaleX(0.913);transform-origin:0 0">2.4653</span>
<div class="sbox" style="left:1176px;top:754px;width:36px"></div>
<span class="t" style="left:1177.9px;top:755px;transform:scaleX(0.8);transform-origin:0 0">Y1</span>
<div class="sval" style="left:1214px;top:754px;width:66px"></div>
<span class="t" style="left:1219.2px;top:755px;color:#aca899;transform:scaleX(0.886);transform-origin:0 0">1.0646</span>

</div>

<!-- ================= TASKBAR ================= -->
<div class="a" id="task">
<!--TASK_CONTENT-->
<!-- start button -->
<div class="a" style="left:0;top:0;width:96px;height:30px;border-radius:0 12px 14px 0 / 0 15px 15px 0;
 background:linear-gradient(to bottom,#2f7d2f 0,#52ab52 6%,#4aa14a 12%,#3f963f 22%,#388e38 40%,#368c36 60%,#3a933a 80%,#2f812f 92%,#236a23 100%);box-shadow:inset -3px 0 4px -1px #1f5f1f, 1px 0 1px #1a3f9a"></div>
<svg style="left:10px;top:5px" width="21" height="19" viewBox="-0.5 0 18 17">
 <path d="M2 3 C4 1.5 6.5 1.5 8.5 2.8 L7.4 8 C5.4 6.8 3 6.8 1 8.2 Z" fill="#e8542a"/>
 <path d="M9.8 3.2 C12 4.4 14.5 4.4 16.8 3 L15.6 8.3 C13.4 9.6 11 9.6 8.8 8.4 Z" fill="#7ec242"/>
 <path d="M0.8 9.4 C2.8 8 5.2 8 7.2 9.2 L6 14.6 C4 13.4 1.6 13.4 -0.4 14.8 Z" fill="#3c7be8"/>
 <path d="M8.6 9.7 C10.8 10.9 13.2 10.9 15.4 9.6 L14.2 15 C12 16.2 9.6 16.2 7.4 15 Z" fill="#f6c02a"/>
</svg>
<span class="t" style="left:35px;top:4px;font-size:17.5px;line-height:20px;font-weight:bold;font-style:italic;color:#fff;text-shadow:1px 1px 1px #1c4a1c;letter-spacing:-0.5px;-webkit-text-stroke:0">пуск</span>
<!-- task buttons -->
<div class="tbtn" style="left:106px;width:158px">
 <svg style="left:9px;top:4px" width="17" height="16" viewBox="0 0 17 16"><path d="M1 3.5 Q1 2 2.5 2 H6 L7.5 3.8 H14 Q15 3.8 15 5 V12.5 Q15 14 13.5 14 H2.5 Q1 14 1 12.5 Z" fill="#e8c860" stroke="#a07818" stroke-width="0.9"/><path d="M1.5 6.5 H15.5 V12.5 Q15.5 13.6 14 13.6 H3 Q1.5 13.6 1.5 12.5 Z" fill="#fdeea0"/></svg>
 <span class="t" style="left:28.3px;transform:scaleX(0.937);transform-origin:0 0">Расчеты</span></div>
<div class="tbtn" style="left:266px;width:158px">
 <svg style="left:10px;top:4px" width="16" height="17" viewBox="0 0 16 17"><rect x="1" y="1" width="14" height="15" rx="3" fill="#5aa8a0"/><circle cx="8.5" cy="9" r="5" fill="#d8f0e0" stroke="#2a8a4a" stroke-width="1.4"/><path d="M3 3 H9 M6 3 V8" stroke="#f8fff8" stroke-width="1.8" fill="none"/><circle cx="8.5" cy="9.5" r="2" fill="#3a9a5a"/></svg>
 <span class="t" style="left:29.0px;transform:scaleX(0.914);transform-origin:0 0">Total Commander 6.5...</span></div>
<div class="tbtn" style="left:426px;width:158px">
 <svg style="left:10px;top:3px" width="16" height="18" viewBox="0 0 16 18"><ellipse cx="8" cy="9" rx="5.2" ry="7.2" fill="none" stroke="#d01818" stroke-width="3.4"/><ellipse cx="8" cy="9" rx="2.2" ry="5" fill="#fff" opacity=".9"/><path d="M1 12 L4 14" stroke="#6a2a2a" stroke-width="1.5"/></svg>
 <span class="t" style="left:28.3px;transform:scaleX(0.934);transform-origin:0 0">Краснодарский Фор...</span></div>
<div class="tbtn act" style="left:586px;width:158px">
 <svg style="left:10px;top:4px" width="17" height="17" viewBox="0 0 17 17"><circle cx="8.5" cy="8.5" r="8.3" fill="url(#lg)"/><path d="M7.6 2.6 L14.2 13 H2.2 Z" fill="#ffe4ec"/><path d="M6.2 5.6 L11.6 13 M4.8 8 L8.6 13 M3.4 10.4 L5.4 13 M8.2 4.2 L13.6 12" stroke="#c8385a" stroke-width="1.1" fill="none"/></svg>
 <span class="t" style="left:30.3px;transform:scaleX(0.919);transform-origin:0 0">Ansoft HFSS - Invert...</span></div>
<span class="t" style="left:1134.7px;top:9px;color:#fff;transform:scaleX(0.8);transform-origin:0 0">EN</span>
<!-- tray -->
<div class="a" style="left:1169px;top:0;width:111px;height:30px;
 background:linear-gradient(to bottom,#0c5fc8 0,#1a9cf0 5%,#1894ee 12%,#138ae8 25%,#0f86e6 50%,#1590ea 80%,#1083e0 92%,#0a5fc0 100%);box-shadow:inset 1px 0 0 #0a3a9a, inset 2px 0 0 #3ab0f8"></div>
<svg style="left:1160px;top:6px" width="20" height="20" viewBox="0 0 22 22"><defs><radialGradient id="tg" cx="40%" cy="30%" r="75%"><stop offset="0" stop-color="#8ec8ff"/><stop offset="0.6" stop-color="#2a78e8"/><stop offset="1" stop-color="#1448b8"/></radialGradient></defs><circle cx="11" cy="11" r="10" fill="url(#tg)" stroke="#9ad0ff" stroke-width="0.8"/><path d="M13 6.5 L8.5 11 L13 15.5" stroke="#fff" stroke-width="2.4" fill="none"/></svg>
<svg style="left:1180px;top:8px" width="16" height="16" viewBox="0 0 16 16"><g stroke="#5a9a10" stroke-width="4.6" stroke-linecap="round"><path d="M8 2.2V13.8M2.2 8H13.8M3.9 3.9L12.1 12.1M12.1 3.9L3.9 12.1"/></g><g stroke="#9ae028" stroke-width="3.2" stroke-linecap="round"><path d="M8 2.2V13.8M2.2 8H13.8M3.9 3.9L12.1 12.1M12.1 3.9L3.9 12.1"/></g><circle cx="8" cy="8" r="1.8" fill="#f8f060"/></svg>
<svg style="left:1197px;top:7px" width="17" height="18" viewBox="0 0 17 18"><path d="M6 1 H12 V8 H6 Z" fill="#2a58b8"/><path d="M6 1 L8 0 H13 L12 1 Z M12 1 L13 0 V7 L12 8 Z" fill="#18408a"/><rect x="1" y="8" width="8" height="7" rx="1" fill="#f0c030"/><path d="M1 8 L2.5 6.6 H9.5 L9 8 Z" fill="#f8e070"/><rect x="9" y="9" width="7" height="6.5" rx="1" fill="#38a838"/><path d="M10 12 L12 14 L15.5 9.5" stroke="#d8ffd0" stroke-width="1.2" fill="none"/></svg>
<svg style="left:1214px;top:6px" width="18" height="18" viewBox="0 0 18 18"><defs><radialGradient id="ag" cx="35%" cy="30%" r="75%"><stop offset="0" stop-color="#a8b8d0"/><stop offset="0.5" stop-color="#3a5a98"/><stop offset="1" stop-color="#0a1a48"/></radialGradient></defs><circle cx="9" cy="9" r="8.5" fill="url(#ag)"/><text x="9.4" y="14" font-size="15" font-weight="bold" fill="#fff" text-anchor="middle" font-family="'Liberation Sans',sans-serif">a</text></svg>
<span class="t" style="left:1242.3px;top:9px;color:#fff;transform:scaleX(0.887);transform-origin:0 0">3:00</span>

</div>

</body>
</html>
